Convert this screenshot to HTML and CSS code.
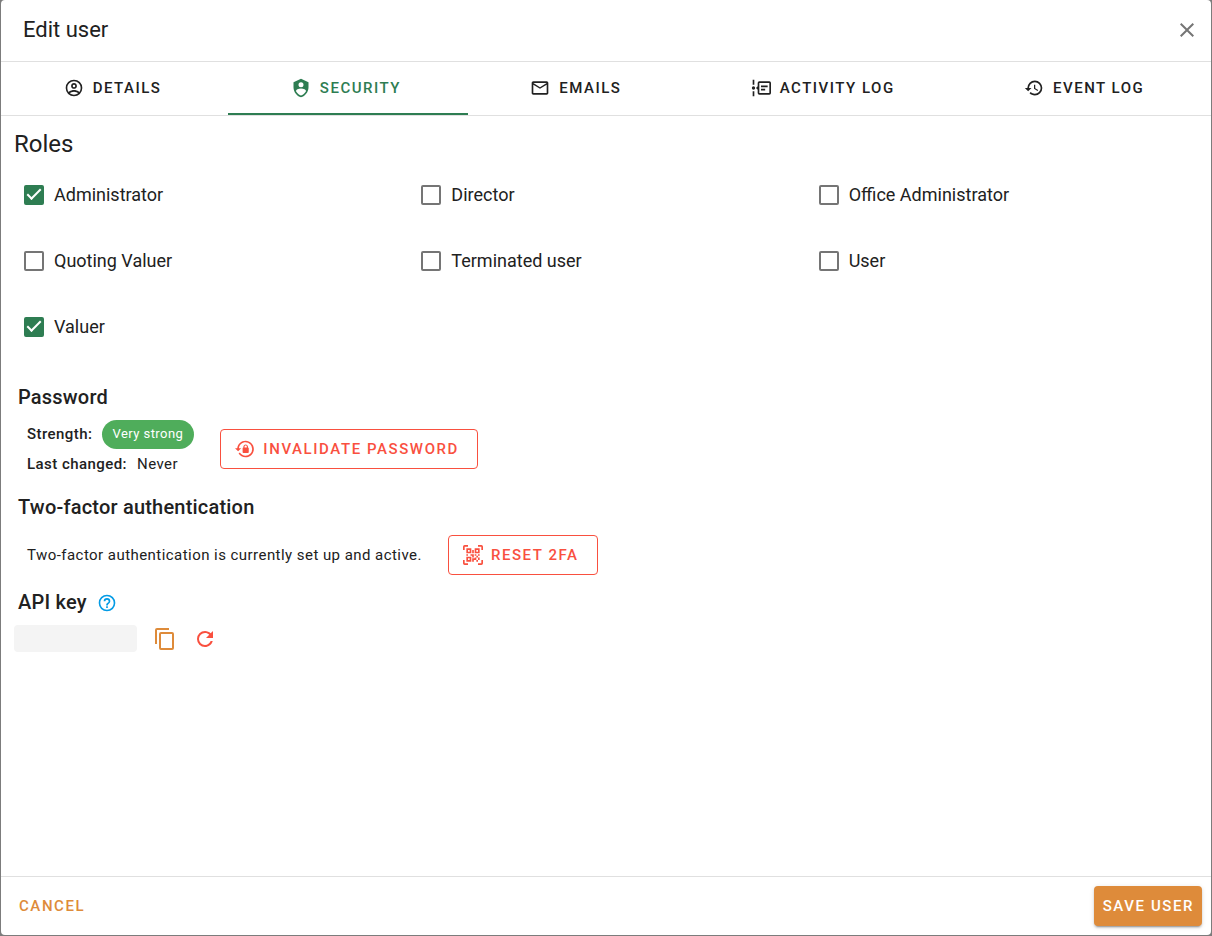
FILE: index.html
```
<!DOCTYPE html>
<html lang="en">
<head>
    <meta charset="UTF-8">
    <meta name="viewport" content="width=device-width, initial-scale=1.0">
    <title>Edit user</title>
    <link rel="stylesheet" href="styles.css">
</head>
<body>
    <div class="dialog" role="dialog" aria-labelledby="dialogTitle">
        <header class="dialog-header">
            <h1 id="dialogTitle">Edit user</h1>
            <button type="button" class="icon-btn close" aria-label="Close">
                <svg class="icon icon-lg" viewBox="0 0 24 24"><path d="M19,6.41L17.59,5L12,10.59L6.41,5L5,6.41L10.59,12L5,17.59L6.41,19L12,13.41L17.59,19L19,17.59L13.41,12L19,6.41Z"/></svg>
            </button>
        </header>

        <nav class="tabs">
            <a href="#details" class="tab">
                <svg class="icon" viewBox="0 0 24 24"><path d="M12,2A10,10 0 0,0 2,12A10,10 0 0,0 12,22A10,10 0 0,0 22,12A10,10 0 0,0 12,2M7.07,18.28C7.5,17.38 10.12,16.5 12,16.5C13.88,16.5 16.5,17.38 16.93,18.28C15.57,19.36 13.86,20 12,20C10.14,20 8.43,19.36 7.07,18.28M18.36,16.83C16.93,15.09 13.46,14.5 12,14.5C10.54,14.5 7.07,15.09 5.64,16.83C4.62,15.5 4,13.82 4,12C4,7.59 7.59,4 12,4C16.41,4 20,7.59 20,12C20,13.82 19.38,15.5 18.36,16.83M12,6C10.06,6 8.5,7.56 8.5,9.5C8.5,11.44 10.06,13 12,13C13.94,13 15.5,11.44 15.5,9.5C15.5,7.56 13.94,6 12,6M12,11A1.5,1.5 0 0,1 10.5,9.5A1.5,1.5 0 0,1 12,8A1.5,1.5 0 0,1 13.5,9.5A1.5,1.5 0 0,1 12,11Z"/></svg>
                Details
            </a>
            <a href="#security" class="tab active">
                <svg class="icon" viewBox="0 0 24 24"><path d="M12,1L3,5V11C3,16.55 6.84,21.74 12,23C17.16,21.74 21,16.55 21,11V5L12,1M12,5A3,3 0 0,1 15,8A3,3 0 0,1 12,11A3,3 0 0,1 9,8A3,3 0 0,1 12,5M17.13,17C15.92,18.85 14.11,20.24 12,20.92C9.89,20.24 8.08,18.85 6.87,17C6.53,16.5 6.24,16 6,15.47C6,13.82 8.71,12.47 12,12.47C15.29,12.47 18,13.79 18,15.47C17.76,16 17.47,16.5 17.13,17Z"/></svg>
                Security
            </a>
            <a href="#emails" class="tab">
                <svg class="icon" viewBox="0 0 24 24"><path d="M22 6C22 4.9 21.1 4 20 4H4C2.9 4 2 4.9 2 6V18C2 19.1 2.9 20 4 20H20C21.1 20 22 19.1 22 18V6M20 6L12 11L4 6H20M20 18H4V8L12 13L20 8V18Z"/></svg>
                Emails
            </a>
            <a href="#activity" class="tab">
                <svg class="icon" viewBox="0 0 24 24"><path fill-rule="evenodd" d="M2,2H4V8H2V2M2,16H4V22H2V16M5,12A2,2 0 0,1 3,14A2,2 0 0,1 1,12A2,2 0 0,1 3,10A2,2 0 0,1 5,12M24,6V18A2,2 0 0,1 22,20H10A2,2 0 0,1 8,18V14L6,12L8,10V6A2,2 0 0,1 10,4H22A2,2 0 0,1 24,6M10,6V18H22V6H10M12,9H20V11H12V9M12,13H17V15H12V13Z"/></svg>
                Activity log
            </a>
            <a href="#events" class="tab">
                <svg class="icon" viewBox="0 0 24 24"><path d="M13.5,8H12V13L16.28,15.54L17,14.33L13.5,12.25V8M13,3A9,9 0 0,0 4,12H1L4.96,16.03L9,12H6A7,7 0 0,1 13,5A7,7 0 0,1 20,12A7,7 0 0,1 13,19C11.07,19 9.32,18.21 8.06,16.94L6.64,18.36C8.27,20 10.5,21 13,21A9,9 0 0,0 22,12A9,9 0 0,0 13,3"/></svg>
                Event log
            </a>
        </nav>

        <main class="dialog-body">
            <h2 class="roles-title">Roles</h2>
            <div class="roles">
                <label class="role"><input type="checkbox" checked>Administrator</label>
                <label class="role"><input type="checkbox">Director</label>
                <label class="role"><input type="checkbox">Office Administrator</label>
                <label class="role"><input type="checkbox">Quoting Valuer</label>
                <label class="role"><input type="checkbox">Terminated user</label>
                <label class="role"><input type="checkbox">User</label>
                <label class="role"><input type="checkbox" checked>Valuer</label>
            </div>

            <section>
                <h3>Password</h3>
                <div class="section-row password-row">
                    <div class="password-info">
                        <div><strong>Strength:</strong><span class="chip">Very strong</span></div>
                        <div><strong>Last changed:</strong>Never</div>
                    </div>
                    <button type="button" class="btn btn-outlined">
                        <svg class="icon" viewBox="0 0 24 24"><path d="M12.63,2C18.16,2 22.64,6.5 22.64,12C22.64,17.5 18.16,22 12.63,22C9.12,22 6.05,20.18 4.26,17.43L5.84,16.18C7.25,18.47 9.76,20 12.64,20A8,8 0 0,0 20.64,12A8,8 0 0,0 12.64,4C8.56,4 5.2,7.06 4.71,11H7.47L3.73,14.73L0,11H2.69C3.19,5.95 7.45,2 12.63,2M15.59,10.24C16.09,10.25 16.5,10.65 16.5,11.16V15.77C16.5,16.27 16.09,16.69 15.58,16.69H10.05C9.54,16.69 9.13,16.27 9.13,15.77V11.16C9.13,10.65 9.54,10.25 10.04,10.24V9.23C10.04,7.7 11.29,6.46 12.81,6.46C14.34,6.46 15.59,7.7 15.59,9.23V10.24M12.81,7.86C12.06,7.86 11.44,8.47 11.44,9.23V10.24H14.19V9.23C14.19,8.47 13.57,7.86 12.81,7.86Z"/></svg>
                        Invalidate password
                    </button>
                </div>
            </section>

            <section>
                <h3>Two-factor authentication</h3>
                <div class="section-row twofa-row">
                    <p>Two-factor authentication is currently set up and active.</p>
                    <button type="button" class="btn btn-outlined">
                        <svg class="icon" viewBox="0 0 24 24"><path d="M4,4H10V10H4V4M20,4V10H14V4H20M14,15H16V13H14V11H16V13H18V11H20V13H18V15H20V18H18V20H16V18H13V20H11V16H14V15M16,15V18H18V15H16M4,20V14H10V20H4M6,6V8H8V6H6M16,6V8H18V6H16M6,16V18H8V16H6M4,11H6V13H4V11M9,11H13V15H11V13H9V11M11,6H13V10H11V6M2,2V6H0V2A2,2 0 0,1 2,0H6V2H2M22,0A2,2 0 0,1 24,2V6H22V2H18V0H22M2,18V22H6V24H2A2,2 0 0,1 0,22V18H2M22,22V18H24V22A2,2 0 0,1 22,24H18V22H22Z"/></svg>
                        Reset 2FA
                    </button>
                </div>
            </section>

            <section>
                <h3>
                    API key
                    <svg class="icon help" viewBox="0 0 24 24"><path d="M11,18H13V16H11V18M12,2A10,10 0 0,0 2,12A10,10 0 0,0 12,22A10,10 0 0,0 22,12A10,10 0 0,0 12,2M12,20C7.59,20 4,16.41 4,12C4,7.59 7.59,4 12,4C16.41,4 20,7.59 20,12C20,16.41 16.41,20 12,20M12,6A4,4 0 0,0 8,10H10A2,2 0 0,1 12,8A2,2 0 0,1 14,10C14,12 11,11.75 11,15H13C13,12.75 16,12.5 16,10A4,4 0 0,0 12,6Z"/></svg>
                </h3>
                <div class="api-row">
                    <code class="api-key"></code>
                    <button type="button" class="icon-btn copy" aria-label="Copy API key">
                        <svg class="icon icon-lg" viewBox="0 0 24 24"><path d="M19,21H8V7H19M19,5H8A2,2 0 0,0 6,7V21A2,2 0 0,0 8,23H19A2,2 0 0,0 21,21V7A2,2 0 0,0 19,5M16,1H4A2,2 0 0,0 2,3V17H4V3H16V1Z"/></svg>
                    </button>
                    <button type="button" class="icon-btn refresh" aria-label="Regenerate API key">
                        <svg class="icon icon-lg" viewBox="0 0 24 24"><path d="M17.65,6.35C16.2,4.9 14.21,4 12,4A8,8 0 0,0 4,12A8,8 0 0,0 12,20C15.73,20 18.84,17.45 19.73,14H17.65C16.83,16.33 14.61,18 12,18A6,6 0 0,1 6,12A6,6 0 0,1 12,6C13.66,6 15.14,6.69 16.22,7.78L13,11H20V4L17.65,6.35Z"/></svg>
                    </button>
                </div>
            </section>
        </main>

        <footer class="dialog-footer">
            <button type="button" class="btn btn-text">Cancel</button>
            <button type="submit" class="btn btn-primary">Save user</button>
        </footer>
    </div>
</body>
</html>
```
FILE: styles.css
```
* {
    box-sizing: border-box;
}
body {
    font-family: Roboto, sans-serif;
    font-size: 15px;
    color: #212121;
    margin: 0;
    padding: 0 1px 1px;
    min-height: 100vh;
    display: flex;
    background: #7c7c7c;
}
h1, h2, h3, p {
    margin: 0;
}
.dialog {
    flex: 1;
    display: flex;
    flex-direction: column;
    background-color: #fff;
    border-radius: 4px;
}
.dialog-header {
    display: flex;
    align-items: center;
    justify-content: space-between;
    height: 62px;
    padding: 0 12px 2px 22px;
    border-bottom: 1px solid #e0e0e0;
}
h1 {
    font-size: 22px;
    font-weight: 400;
    line-height: 32px;
}
.icon {
    width: 20px;
    height: 20px;
    flex: none;
    fill: currentColor;
}
.icon-lg {
    width: 24px;
    height: 24px;
}
.icon-btn {
    display: flex;
    padding: 0;
    border: none;
    background: none;
    cursor: pointer;
}
.close {
    color: #757575;
}

/* tabs */
.tabs {
    display: flex;
    height: 54px;
    border-bottom: 1px solid #e0e0e0;
}
.tab {
    flex: 1 1 auto;
    display: flex;
    align-items: center;
    justify-content: center;
    gap: 9px;
    padding-right: 4px;
    color: #212121;
    font-weight: 500;
    letter-spacing: 0.1em;
    text-transform: uppercase;
    text-decoration: none;
    border-bottom: 2px solid transparent;
}
.tab.active {
    color: #2e7d52;
    border-bottom-color: #2e7d52;
}

/* body */
.dialog-body {
    flex: 1;
    padding: 12px 9px;
}
.roles-title {
    font-size: 24px;
    font-weight: 400;
    line-height: 32px;
    padding-left: 4px;
}
.roles {
    display: grid;
    grid-template-columns: repeat(3, 1fr);
    margin-top: 2px;
    margin-bottom: 21px;
}
.role {
    display: flex;
    align-items: center;
    gap: 10px;
    height: 66px;
    padding-left: 14px;
    font-size: 18px;
    line-height: 20px;
}
.role input {
    appearance: none;
    width: 20px;
    height: 20px;
    margin: 0;
    border: 2px solid #757575;
    border-radius: 2px;
    display: grid;
    place-items: center;
}
.role input:checked {
    background-color: #2e7d52;
    border-color: #2e7d52;
}
.role input:checked::before {
    content: "";
    box-sizing: border-box;
    width: 14px;
    height: 7px;
    margin-top: -5px;
    border: solid #fff;
    border-width: 0 0 2px 2px;
    transform: rotate(-45deg);
}
h3 {
    display: flex;
    align-items: center;
    gap: 10px;
    font-size: 20px;
    font-weight: 500;
    line-height: 32px;
    letter-spacing: 0.01em;
    padding-left: 8px;
}
.section-row {
    display: flex;
    align-items: center;
    gap: 26px;
    padding-left: 17px;
    letter-spacing: 0.03em;
}
.password-row {
    height: 78px;
    padding-bottom: 6px;
}
.twofa-row {
    height: 63px;
}
.password-info div {
    display: flex;
    align-items: center;
    gap: 10px;
    height: 30px;
}
strong {
    font-weight: 500;
}
.chip {
    height: 29px;
    padding: 0 11px 0 10px;
    border-radius: 15px;
    background-color: #4fad5b;
    color: #fff;
    font-size: 13px;
    line-height: 28px;
}
.help {
    margin-top: 2px;
    color: #039be5;
}
.api-row {
    display: flex;
    align-items: center;
    gap: 16px;
    padding: 7px 4px;
}
.api-key {
    width: 123px;
    height: 27px;
    border-radius: 4px;
    background-color: #f4f4f4;
}
.copy {
    color: #de8b3a;
}
.refresh {
    color: #f9503f;
}

/* buttons */
.btn {
    display: flex;
    align-items: center;
    gap: 8px;
    height: 40px;
    border: none;
    border-radius: 4px;
    background: none;
    font-family: inherit;
    font-size: 15px;
    font-weight: 500;
    letter-spacing: 0.105em;
    text-transform: uppercase;
    cursor: pointer;
}
.btn-outlined {
    padding: 0 18px 0 14px;
    border: 1px solid #f9503f;
    color: #f9503f;
}
.btn-text {
    padding: 0 9px;
    color: #de8b3a;
}
.btn-primary {
    padding: 0 8px 0 9px;
    background-color: #de8b3a;
    color: #fff;
    box-shadow: 0 3px 1px -2px rgba(0,0,0,0.2), 0 2px 2px rgba(0,0,0,0.14), 0 1px 5px rgba(0,0,0,0.12);
}
.dialog-footer {
    display: flex;
    align-items: center;
    justify-content: space-between;
    height: 59px;
    padding: 0 9px;
    border-top: 1px solid #e0e0e0;
}
```
